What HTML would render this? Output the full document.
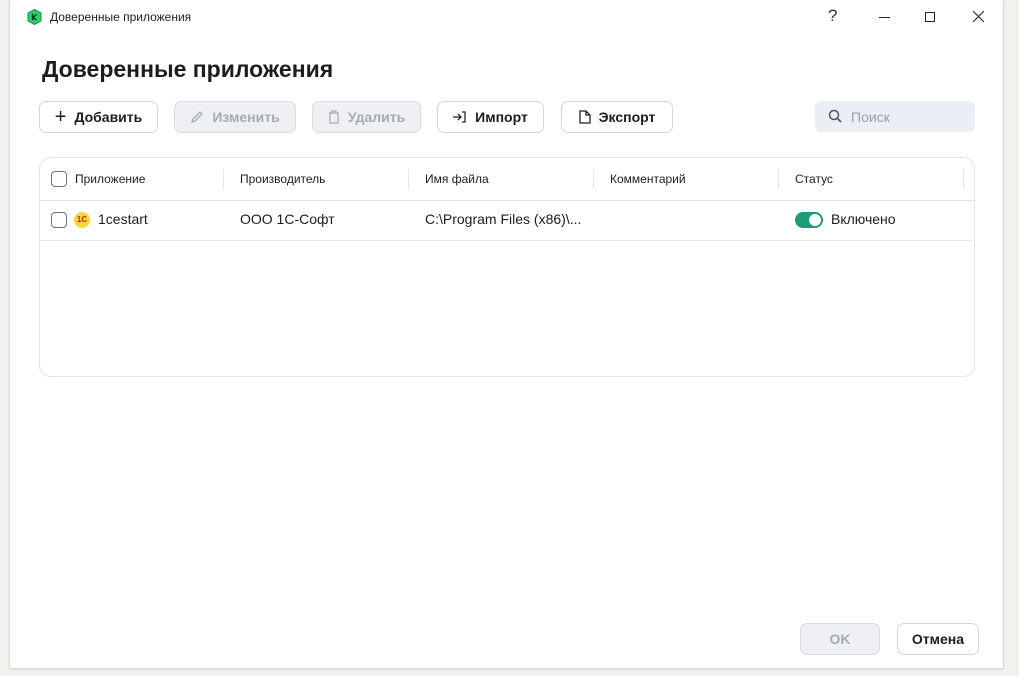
<!DOCTYPE html>
<html><head><meta charset="utf-8"><style>
*{box-sizing:border-box;margin:0;padding:0}
body{width:1019px;height:676px;overflow:hidden;background:#f3f1ee;font-family:"Liberation Sans","DejaVu Sans",sans-serif;color:#1d1d1b;position:relative}
.win{position:absolute;left:10px;top:0;width:993px;height:668px;background:#fff;box-shadow:0 0 0 1px #d6d9de,0 1px 3px rgba(0,0,0,.15)}
.abs{position:absolute}
.btn{position:absolute;top:101px;height:32px;border:1px solid #d3d6db;border-radius:7px;background:#fff;font-size:14px;font-weight:bold;display:flex;align-items:center;justify-content:center;gap:8px}
.dis{background:#eef0f3;color:#a7abb2;border-color:#d9dce1}
.cb{position:absolute;width:16px;height:16px;border:1.5px solid #6e737b;border-radius:4px}
.th{position:absolute;top:172px;font-size:12px}
.sep{position:absolute;top:169px;width:1px;height:20px;background:#e3e5e9}
</style></head><body>
<div class="win">
 <svg class="abs" style="left:17px;top:9px" width="15" height="16" viewBox="0 0 15 16"><path d="M7.5 0.5 L14 4 V12 L7.5 15.5 L1 12 V4Z" fill="#2bd26b" stroke="#1a8c45"/><path d="M5.5 4.5V11.5M9.5 5.5 6 8.5 9.5 11" stroke="#0b3a1f" stroke-width="1.4" fill="none"/></svg>
 <div class="abs" style="left:40px;top:10px;font-size:12px">Доверенные приложения</div>
 <div class="abs" style="left:818px;top:6px;font-size:17px;color:#333">?</div>
 <div class="abs" style="left:869px;top:17px;width:11px;height:1px;background:#222"></div>
 <div class="abs" style="left:915px;top:12px;width:10px;height:10px;border:1px solid #222"></div>
 <svg class="abs" style="left:963px;top:11px" width="11" height="11"><path d="M0 0L11 11M11 0L0 11" stroke="#222" stroke-width="1.1"/></svg>
 <div class="abs" style="left:32px;top:56px;font-size:23px;font-weight:bold">Доверенные приложения</div>

 <div class="btn" style="left:29px;width:119px"><span style="font-size:20px;font-weight:normal">+</span>Добавить</div>
 <div class="btn dis" style="left:164px;width:122px"><svg width="14" height="14"><path d="M2 12L3 9 10 2 12 4 5 11Z" stroke="#a7abb2" fill="none" stroke-width="1.3"/></svg>Изменить</div>
 <div class="btn dis" style="left:302px;width:109px"><svg width="12" height="14"><path d="M1 3H11M4 3V1H8V3M2 3V13H10V3" stroke="#a7abb2" fill="none" stroke-width="1.3"/></svg>Удалить</div>
 <div class="btn" style="left:427px;width:107px"><svg width="14" height="12"><path d="M0 6H8M5 3L8 6 5 9M9 1H12V11H9" stroke="#222" fill="none" stroke-width="1.3"/></svg>Импорт</div>
 <div class="btn" style="left:551px;width:112px"><svg width="12" height="14"><path d="M1 1H7L11 5V13H1Z M7 1V5H11" stroke="#222" fill="none" stroke-width="1.3"/></svg>Экспорт</div>
 <div class="abs" style="left:805px;top:101px;width:160px;height:31px;background:#ebeff5;border-radius:6px"></div>
 <svg class="abs" style="left:818px;top:109px" width="14" height="14"><circle cx="6" cy="6" r="4.5" stroke="#555" fill="none" stroke-width="1.5"/><path d="M9.5 9.5L13 13" stroke="#555" stroke-width="1.6"/></svg>
 <div class="abs" style="left:841px;top:109px;font-size:14px;color:#9aa0a8">Поиск</div>

 <div class="abs" style="left:29px;top:157px;width:936px;height:220px;border:1px solid #e3e5e9;border-radius:12px"></div>
 <div class="abs" style="left:30px;top:200px;width:934px;height:1px;background:#dfe2e6"></div>
 <div class="abs" style="left:30px;top:240px;width:934px;height:1px;background:#e8eaee"></div>
 <div class="cb" style="left:41px;top:171px"></div>
 <div class="th" style="left:65px">Приложение</div>
 <div class="sep" style="left:213px"></div>
 <div class="th" style="left:230px">Производитель</div>
 <div class="sep" style="left:398px"></div>
 <div class="th" style="left:415px">Имя файла</div>
 <div class="sep" style="left:583px"></div>
 <div class="th" style="left:600px">Комментарий</div>
 <div class="sep" style="left:768px"></div>
 <div class="th" style="left:785px">Статус</div>
 <div class="sep" style="left:953px"></div>

 <div class="cb" style="left:41px;top:212px"></div>
 <div class="abs" style="left:64px;top:212px;width:16px;height:16px;border-radius:50%;background:#f7d83a;color:#d0261e;font-size:8px;font-weight:bold;text-align:center;line-height:16px">1C</div>
 <div class="abs" style="left:88px;top:211px;font-size:14px">1cestart</div>
 <div class="abs" style="left:230px;top:211px;font-size:14px">ООО 1С-Софт</div>
 <div class="abs" style="left:415px;top:211px;font-size:14px">C:\Program Files (x86)\...</div>
 <div class="abs" style="left:785px;top:212px;width:28px;height:16px;border-radius:8px;background:#1e9b79"></div>
 <div class="abs" style="left:799px;top:214px;width:12px;height:12px;border-radius:50%;background:#fff"></div>
 <div class="abs" style="left:821px;top:211px;font-size:14px">Включено</div>

 <div class="btn dis" style="left:790px;top:623px;width:80px">OK</div>
 <div class="btn" style="left:887px;top:623px;width:82px">Отмена</div>
</div>
</body></html>
